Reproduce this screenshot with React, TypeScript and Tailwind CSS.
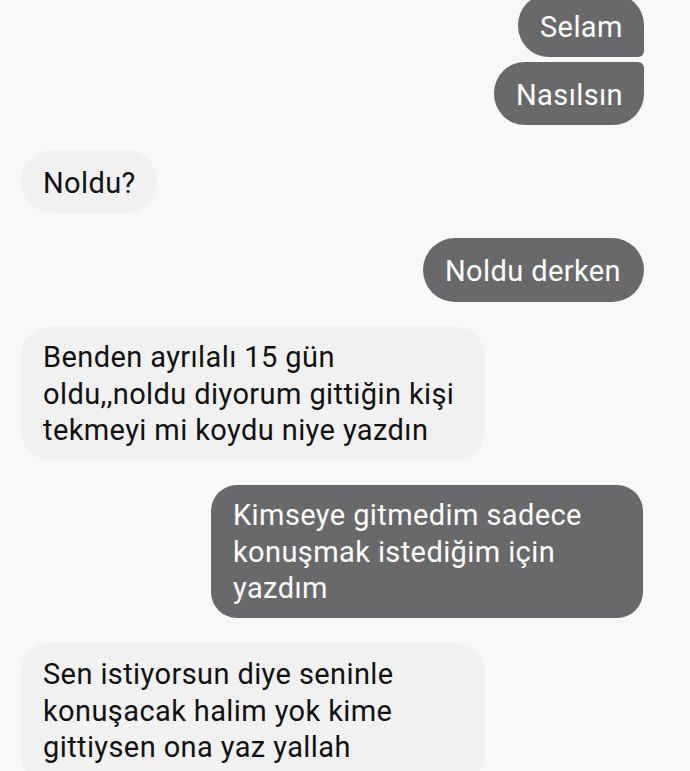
import React from "react";

const inBubble =
  "bg-[#f1f1f1] text-[#111111] rounded-[28px] pl-[22px]";
const outBubble =
  "bg-[#69696b] text-white pl-[22px]";

export default function App() {
  return (
    <div
      className="w-[690px] h-[771px] overflow-hidden bg-[#f8f8f8] text-[29px] tracking-[0.4px]"
      style={{ fontFamily: "Roboto, 'Liberation Sans', sans-serif" }}
    >
      <div className="flex flex-col">
        {/* Selam */}
        <div className="flex justify-end pr-[46px] -mt-[6px]">
          <div
            className={`${outBubble} w-[126px] h-[63px] pt-[15px] pb-[12px] leading-[36px] rounded-tl-[31px] rounded-tr-[31px] rounded-bl-[31px] rounded-br-[6px] whitespace-nowrap`}
          >
            Selam
          </div>
        </div>
        {/* Nasılsın */}
        <div className="flex justify-end pr-[46px] mt-[5px]">
          <div
            className={`${outBubble} w-[150px] h-[63px] pt-[15px] pb-[12px] leading-[36px] rounded-tl-[31px] rounded-tr-[6px] rounded-bl-[31px] rounded-br-[31px] whitespace-nowrap`}
          >
            Nasılsın
          </div>
        </div>
        {/* Noldu? */}
        <div className="flex justify-start pl-[21px] mt-[25px]">
          <div
            className={`${inBubble} w-[136px] h-[63px] pt-[15px] pb-[12px] leading-[36px] rounded-[31px] whitespace-nowrap`}
          >
            Noldu?
          </div>
        </div>
        {/* Noldu derken */}
        <div className="flex justify-end pr-[46px] mt-[25px]">
          <div
            className={`${outBubble} w-[221px] h-[64px] pt-[15px] pb-[13px] leading-[36px] rounded-[32px] whitespace-nowrap`}
          >
            Noldu derken
          </div>
        </div>
        {/* Long incoming */}
        <div className="flex justify-start pl-[21px] mt-[25px]">
          <div
            className={`${inBubble} w-[464px] h-[133px] pt-[12px] pb-[11px] leading-[36.5px] whitespace-nowrap`}
          >
            Benden ayrılalı 15 gün
            <br />
            oldu,,noldu diyorum gittiğin kişi
            <br />
            tekmeyi mi koydu niye yazdın
          </div>
        </div>
        {/* Long outgoing */}
        <div className="flex justify-end pr-[47px] mt-[25px]">
          <div
            className={`${outBubble} w-[432px] h-[133px] pt-[12px] pb-[11px] leading-[36.5px] rounded-[26px] whitespace-nowrap`}
          >
            Kimseye gitmedim sadece
            <br />
            konuşmak istediğim için
            <br />
            yazdım
          </div>
        </div>
        {/* Last incoming */}
        <div className="flex justify-start pl-[21px] mt-[25px]">
          <div
            className={`${inBubble} w-[464px] h-[140px] pt-[13px] pb-[11px] leading-[36.5px] whitespace-nowrap`}
          >
            Sen istiyorsun diye seninle
            <br />
            konuşacak halim yok kime
            <br />
            gittiysen ona yaz yallah
          </div>
        </div>
      </div>
    </div>
  );
}
